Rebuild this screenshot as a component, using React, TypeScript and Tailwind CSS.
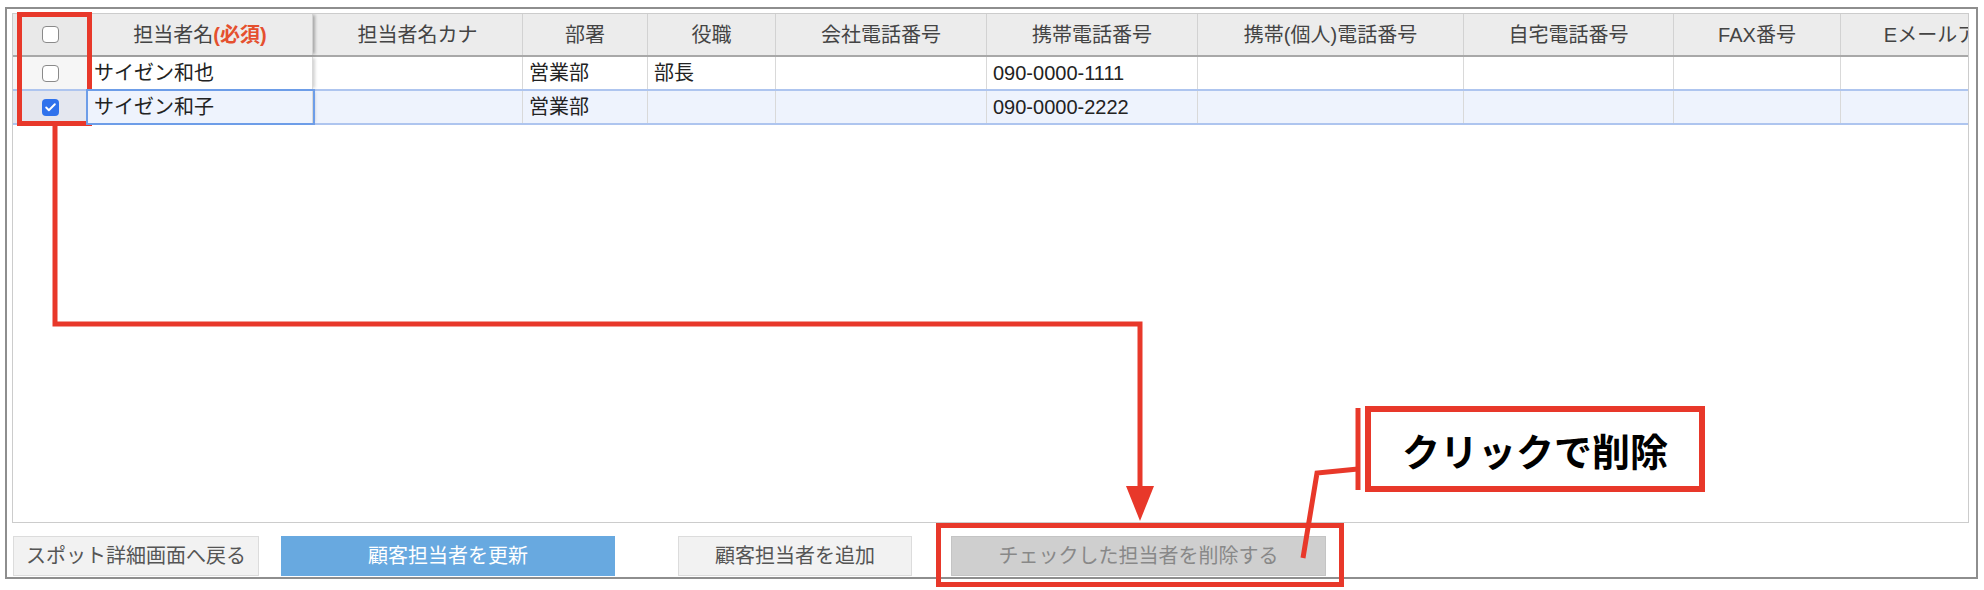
import {Check} from 'lucide-react';

const font = 'font-["Liberation_Sans","Noto_Sans_CJK_JP",sans-serif]';

// column widths of the contact grid, left to right
const columns = [
    {key: 'name', label: '担当者名', required: true, w: 'w-[225px]'},
    {key: 'kana', label: '担当者名カナ', w: 'w-[210px]'},
    {key: 'dept', label: '部署', w: 'w-[125px]'},
    {key: 'title', label: '役職', w: 'w-[128px]'},
    {key: 'office', label: '会社電話番号', w: 'w-[211px]'},
    {key: 'mobile', label: '携帯電話番号', w: 'w-[211px]'},
    {key: 'private', label: '携帯(個人)電話番号', w: 'w-[266px]'},
    {key: 'home', label: '自宅電話番号', w: 'w-[210px]'},
    {key: 'fax', label: 'FAX番号', w: 'w-[167px]'},
    {key: 'mail', label: 'Eメールアドレス', w: 'w-[240px]'},
];

const rows: Record<string, string>[] = [
    {name: 'サイゼン和也', dept: '営業部', title: '部長', mobile: '090-0000-1111'},
    {name: 'サイゼン和子', dept: '営業部', mobile: '090-0000-2222'},
];

const Box = ({checked}: {checked?: boolean}) =>
    checked ? (
        <span className="w-[17px] h-[17px] rounded-[4px] bg-[#2f72ec] flex items-center justify-center">
            <Check size={13} strokeWidth={3.5} className="text-white"/>
        </span>
    ) : (
        <span className="w-[17px] h-[17px] rounded-[4px] border border-[#8a8a8a] bg-white"/>
    );

const Button = ({children, className}: {children: string; className: string}) => (
    <button className={`h-[40px] text-[20px] flex items-center justify-center ${className}`}>{children}</button>
);

export default function App() {
    return (
        <div className={`relative w-[1984px] h-[590px] bg-white pl-[5px] pt-[7px] ${font}`}>
            <div className="w-[1973px] h-[572px] border-2 border-[#8e8e8e] pl-[5px] pt-[4px] flex flex-col">
                <div className="w-[1957px] h-[510px] border border-[#cccccc] overflow-hidden">
                    {/* header */}
                    <div className="flex h-[43px] bg-[#ececec] border-b-2 border-[#a8a8a8] text-[20px] text-[#444]">
                        <div className="w-[75px] shrink-0 flex items-center justify-center border-r border-[#d2d2d2] bg-[#e9e9e9]">
                            <Box/>
                        </div>
                        {columns.map((c, i) => (
                            <div key={c.key}
                                 className={`${c.w} shrink-0 flex items-center justify-center whitespace-nowrap border-r border-[#d2d2d2] ${i === 0 ? 'relative z-10 shadow-[3px_0_3px_-1px_rgba(0,0,0,0.3)]' : ''}`}>
                                {c.label}
                                {c.required && <span className="font-bold text-[#e5502e]">(必須)</span>}
                            </div>
                        ))}
                    </div>

                    {/* rows */}
                    {rows.map((r, ri) => {
                        const selected = ri === 1;
                        return (
                            <div key={ri}
                                 className={`flex text-[20px] text-[#222] ${selected ? 'h-[36px] bg-[#eef3fd] border-y-2 border-[#aec5ef]' : 'h-[32px] bg-white'}`}>
                                <div className={`w-[75px] shrink-0 flex items-center justify-center border-r border-[#d6d6d6] ${selected ? 'bg-[#e4e7ef]' : 'bg-[#f6f6f6]'}`}>
                                    <Box checked={selected}/>
                                </div>
                                {columns.map((c, i) => (
                                    <div key={c.key}
                                         className={`${c.w} shrink-0 flex items-center pl-[6px] whitespace-nowrap border-r border-[#d9d9d9] ${i === 0 ? 'relative z-10 shadow-[3px_0_3px_-1px_rgba(0,0,0,0.18)]' : ''} ${i === 0 && selected ? 'outline-2 outline-[#6d9de8] bg-[#eef3fd]' : ''}`}>
                                        {r[c.key] ?? ''}
                                    </div>
                                ))}
                            </div>
                        );
                    })}
                </div>

                {/* actions */}
                <div className="flex mt-[13px] ml-[1px]">
                    <Button className="w-[246px] bg-[#f2f2f2] border border-[#dcdcdc] text-[#555]">スポット詳細画面へ戻る</Button>
                    <Button className="w-[334px] ml-[22px] bg-[#68a9e0] text-white">顧客担当者を更新</Button>
                    <Button className="w-[234px] ml-[63px] bg-[#f2f2f2] border border-[#dcdcdc] text-[#555]">顧客担当者を追加</Button>
                    <Button className="w-[375px] ml-[39px] bg-[#cfcfcf] border border-[#c4c4c4] text-[#888]">チェックした担当者を削除する</Button>
                </div>
            </div>

            {/* red annotation marks */}
            <svg className="absolute inset-0 pointer-events-none" width="1984" height="590" fill="none" stroke="#e8382a" strokeWidth="5">
                <rect x="19.5" y="14.5" width="70" height="109"/>
                <polyline points="55,124 55,324 1140,324 1140,490"/>
                <polygon points="1126,486 1154,486 1140,521" fill="#e8382a" stroke="none"/>
                <rect x="938.5" y="525.5" width="403" height="59"/>
                <line x1="1358" y1="408" x2="1358" y2="490"/>
                <polyline points="1358,469 1317,473 1303,558"/>
            </svg>

            <div className="absolute left-[1365px] top-[406px] w-[340px] h-[86px] border-[6px] border-[#e8382a] bg-white flex items-center justify-center">
                <span className='text-[38px] font-bold text-black font-["Noto_Sans_CJK_JP",sans-serif]'>クリックで削除</span>
            </div>
        </div>
    );
}
